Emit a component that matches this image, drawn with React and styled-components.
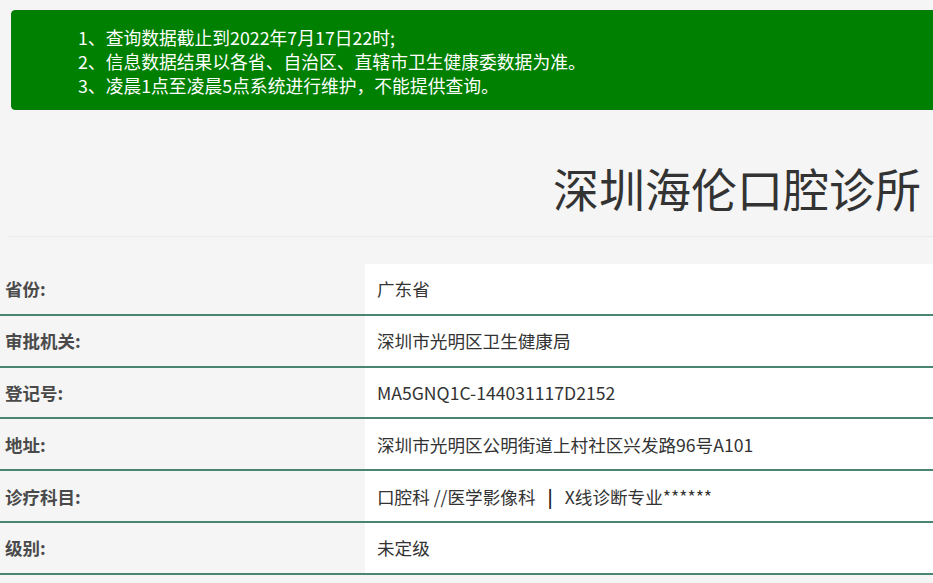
import React from "react";
import styled, { createGlobalStyle } from "styled-components";

const GlobalStyle = createGlobalStyle`
  html, body {
    margin: 0;
    padding: 0;
    background: #f5f5f5;
    overflow: hidden;
    font-family: "Noto Sans CJK SC", "Noto Sans", "Liberation Sans", sans-serif;
  }
`;

const notices = [
  "1、查询数据截止到2022年7月17日22时;",
  "2、信息数据结果以各省、自治区、直辖市卫生健康委数据为准。",
  "3、凌晨1点至凌晨5点系统进行维护，不能提供查询。",
];

const rows = [
  { label: "省份:", value: ["广东省"] },
  { label: "审批机关:", value: ["深圳市光明区卫生健康局"] },
  { label: "登记号:", value: ["MA5GNQ1C-144031117D2152"] },
  { label: "地址:", value: ["深圳市光明区公明街道上村社区兴发路96号A101"] },
  { label: "诊疗科目:", value: ["口腔科 //医学影像科", "X线诊断专业******"] },
  { label: "级别:", value: ["未定级"] },
];

export default function App() {
  return (
    <Page>
      <GlobalStyle />
      <Notice>
        {notices.map((n) => (
          <NoticeLine key={n}>{n}</NoticeLine>
        ))}
      </Notice>
      <Header>
        <Title>深圳海伦口腔诊所</Title>
      </Header>
      <Divider />
      <Table>
        {rows.map((r) => (
          <Row key={r.label}>
            <Label>{r.label}</Label>
            <Value>
              {r.value.map((part, i) => (
                <React.Fragment key={part}>
                  {i > 0 && <Bar>|</Bar>}
                  {part}
                </React.Fragment>
              ))}
            </Value>
          </Row>
        ))}
      </Table>
    </Page>
  );
}

const Page = styled.div`
  width: 100%;
  min-height: 583px;
`;

const Notice = styled.div`
  margin: 10px -20px 0 11px;
  padding: 14px 0 14px 66px;
  height: 100px;
  box-sizing: border-box;
  background: #008000;
  border: 1px solid #0a7a0a;
  border-radius: 4px;
`;

const NoticeLine = styled.div`
  color: #ffffff;
  font-size: 17.8px;
  line-height: 24px;
  white-space: nowrap;
`;

const Header = styled.div`
  display: flex;
  justify-content: flex-end;
  align-items: center;
  height: 126px;
  padding-right: 12px;
`;

const Title = styled.h1`
  margin: 0;
  padding-top: 28px;
  font-size: 46px;
  font-weight: 400;
  color: #333333;
  white-space: nowrap;
`;

const Divider = styled.div`
  height: 1px;
  margin: 0 0 27px 8px;
  background: #eaeaea;
`;

const Table = styled.div`
  display: flex;
  flex-direction: column;
`;

const Row = styled.div`
  display: grid;
  grid-template-columns: 365px 1fr;
  height: 51.8px;
  box-sizing: border-box;
  border-bottom: 2px solid #4a8573;
`;

const Label = styled.div`
  display: flex;
  align-items: center;
  padding-left: 5px;
  font-size: 17.5px;
  font-weight: 700;
  color: #4a4a4a;
  background: #f5f5f5;
`;

const Value = styled.div`
  display: flex;
  align-items: center;
  padding-left: 12px;
  font-size: 17.6px;
  color: #333333;
  background: #ffffff;
  white-space: pre;
`;

const Bar = styled.span`
  margin: 0 12px;
  font-weight: 700;
  color: #222222;
`;
